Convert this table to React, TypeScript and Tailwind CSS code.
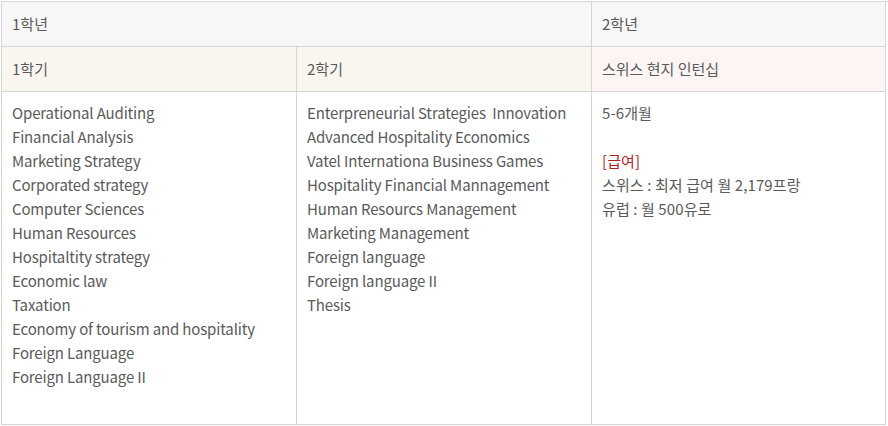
import React from "react";

const col1 = [
  "Operational Auditing",
  "Financial Analysis",
  "Marketing Strategy",
  "Corporated strategy",
  "Computer Sciences",
  "Human Resources",
  "Hospitaltity strategy",
  "Economic law",
  "Taxation",
  "Economy of tourism and hospitality",
  "Foreign Language",
  "Foreign Language II",
];

const col2 = [
  "Enterpreneurial Strategies  Innovation",
  "Advanced Hospitality Economics",
  "Vatel Internationa Business Games",
  "Hospitality Financial Mannagement",
  "Human Resourcs Management",
  "Marketing Management",
  "Foreign language",
  "Foreign language II",
  "Thesis",
];

export default function App() {
  return (
    <div
      className="w-[888px] h-[426px] bg-white pl-px pt-px text-[#5a5a5a] text-[15px] leading-[24px]"
      style={{ fontFamily: '"Noto Sans CJK KR", "Noto Sans", sans-serif' }}
    >
      <div className="grid grid-cols-[295px_295px_294px] grid-rows-[45px_45px_333px] border-t border-l border-[#d5d5d5]">
        <div className="col-span-2 flex items-center bg-[#f7f7f7] border-r border-b border-[#d5d5d5] px-[10px]">
          1학년
        </div>
        <div className="flex items-center bg-[#f7f7f7] border-r border-b border-[#d5d5d5] px-[10px]">
          2학년
        </div>
        <div className="flex items-center bg-[#f9f6f0] border-r border-b border-[#d5d5d5] px-[10px]">
          1학기
        </div>
        <div className="flex items-center bg-[#f9f6f0] border-r border-b border-[#d5d5d5] px-[10px]">
          2학기
        </div>
        <div className="flex items-center bg-[#fdf5f4] border-r border-b border-[#d5d5d5] px-[10px]">
          스위스 현지 인턴십
        </div>
        <div className="border-r border-b border-[#d5d5d5] px-[10px] pt-[9px] tracking-[-0.15px]">
          {col1.map((t) => (
            <div key={t} className="whitespace-pre">{t}</div>
          ))}
        </div>
        <div className="border-r border-b border-[#d5d5d5] px-[10px] pt-[9px] tracking-[-0.15px]">
          {col2.map((t) => (
            <div key={t} className="whitespace-pre">{t}</div>
          ))}
        </div>
        <div className="border-r border-b border-[#d5d5d5] px-[10px] pt-[9px] tracking-[0.1px]">
          <div>5-6개월</div>
          <div className="h-[24px]" />
          <div className="text-[#b22222]">[급여]</div>
          <div>스위스 : 최저 급여 월 2,179프랑</div>
          <div>유럽 : 월 500유로</div>
        </div>
      </div>
    </div>
  );
}
